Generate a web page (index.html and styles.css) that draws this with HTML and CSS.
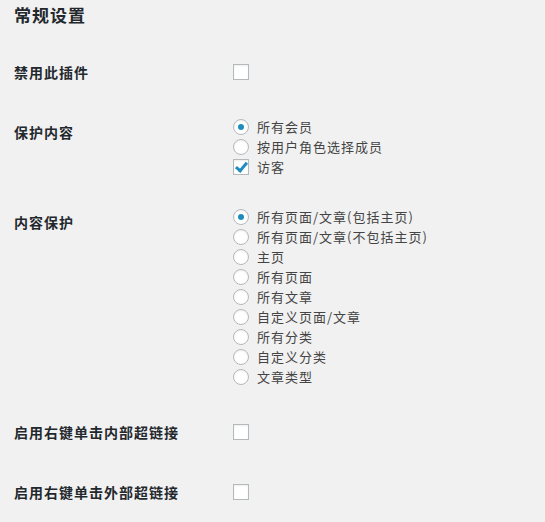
FILE: index.html
```html
<!DOCTYPE html>
<html lang="zh-CN">
<head>
  <meta charset="UTF-8" />
  <meta name="viewport" content="width=device-width, initial-scale=1.0"/>
  <title>常规设置</title>
  <link rel="stylesheet" href="styles.css">
</head>
<body>

  <div class="settings-wrap">
    <h2>常规设置</h2>

    <div class="form-row">
      <div class="form-label">禁用此插件</div>
      <div class="form-field">
        <label class="option"><input type="checkbox" name="disable_plugin"></label>
      </div>
    </div>

    <div class="form-row">
      <div class="form-label">保护内容</div>
      <div class="form-field">
        <label class="option"><input type="radio" name="protect_for" checked> 所有会员</label>
        <label class="option"><input type="radio" name="protect_for"> 按用户角色选择成员</label>
        <label class="option"><input type="checkbox" name="protect_guests" checked> 访客</label>
      </div>
    </div>

    <div class="form-row">
      <div class="form-label">内容保护</div>
      <div class="form-field">
        <label class="option"><input type="radio" name="protect_where" checked> 所有页面/文章(包括主页)</label>
        <label class="option"><input type="radio" name="protect_where"> 所有页面/文章(不包括主页)</label>
        <label class="option"><input type="radio" name="protect_where"> 主页</label>
        <label class="option"><input type="radio" name="protect_where"> 所有页面</label>
        <label class="option"><input type="radio" name="protect_where"> 所有文章</label>
        <label class="option"><input type="radio" name="protect_where"> 自定义页面/文章</label>
        <label class="option"><input type="radio" name="protect_where"> 所有分类</label>
        <label class="option"><input type="radio" name="protect_where"> 自定义分类</label>
        <label class="option"><input type="radio" name="protect_where"> 文章类型</label>
      </div>
    </div>

    <div class="form-row">
      <div class="form-label">启用右键单击内部超链接</div>
      <div class="form-field">
        <label class="option"><input type="checkbox" name="internal_links"></label>
      </div>
    </div>

    <div class="form-row">
      <div class="form-label">启用右键单击外部超链接</div>
      <div class="form-field">
        <label class="option"><input type="checkbox" name="external_links"></label>
      </div>
    </div>
  </div>

</body>
</html>
```

FILE: styles.css
```css
body {
  font-family: "Noto Sans CJK SC", "Noto Sans", sans-serif;
  margin: 0;
  padding: 0;
  background-color: #f1f1f1;
  color: #444;
  font-size: 13px;
}

.settings-wrap {
  padding: 0 14px;
}

.settings-wrap h2 {
  margin: 0 0 16px;
  padding-top: 4px;
  font-size: 17px;
  line-height: 22px;
  letter-spacing: 1px;
  font-weight: 600;
  color: #23282d;
}

.form-row {
  display: flex;
  align-items: center;
}

.form-label {
  align-self: flex-start;
  width: 219px;
  padding: 20px 0;
  line-height: 20px;
  font-size: 14px;
  letter-spacing: 1px;
  font-weight: bold;
  color: #23282d;
}

.form-field {
  padding: 15px 0;
}

.option {
  display: flex;
  align-items: center;
  height: 20px;
  line-height: 20px;
  letter-spacing: 1px;
}

.option input {
  -webkit-appearance: none;
  appearance: none;
  position: relative;
  width: 16px;
  height: 16px;
  margin: 0 8px 0 0;
  border: 1px solid #b4b9be;
  background-color: #fff;
  box-shadow: inset 0 1px 2px rgba(0, 0, 0, 0.07);
  box-sizing: border-box;
  flex-shrink: 0;
}

.option input[type="radio"] {
  border-radius: 50%;
}

.option input[type="radio"]:checked::before {
  content: "";
  position: absolute;
  left: 4px;
  top: 4px;
  width: 6px;
  height: 6px;
  border-radius: 50%;
  background-color: #1e8cbe;
}

.option input[type="checkbox"]:checked::before {
  content: "";
  position: absolute;
  left: 4px;
  top: 0px;
  width: 4px;
  height: 9px;
  border-right: 3px solid #1e8cbe;
  border-bottom: 3px solid #1e8cbe;
  transform: rotate(40deg);
}
```
